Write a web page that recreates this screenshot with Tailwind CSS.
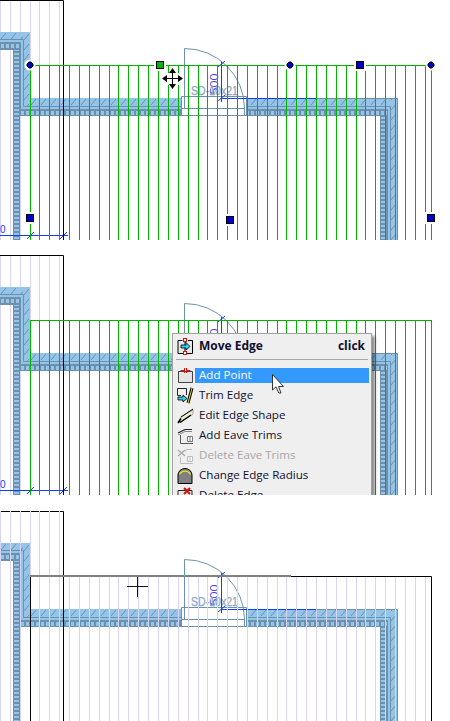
<!DOCTYPE html>
<html lang="en">
<head>
  <meta charset="UTF-8">
  <meta name="viewport" content="width=device-width, initial-scale=1">
  <title>Add Point to Roof Edge</title>
  <script src="https://cdn.jsdelivr.net/npm/@tailwindcss/browser@4"></script>
</head>
<body class="bg-white">

<div class="w-[450px] h-[721px] overflow-hidden flex flex-col">

  <!-- step 1: edge selected -->
  <div class="relative h-[240px] mt-0 overflow-hidden shrink-0">
    <svg class="block" width="450" height="240" viewBox="0 0 450 240">
      <defs>
        <!-- pattern sizes are the distance between wall runs, so both runs start on the same phase -->
        <pattern id="hatch-h" width="10" height="66" patternUnits="userSpaceOnUse" x="0" y="32">
          <rect width="10" height="66" fill="#94c4e8"/>
          <path d="M1 7L6 1" stroke="#6d91ad" fill="none"/>
        </pattern>
        <pattern id="hatch-v" width="367" height="10" patternUnits="userSpaceOnUse" x="23" y="32">
          <rect width="367" height="10" fill="#94c4e8"/>
          <path d="M1 8L6 2" stroke="#6d91ad" fill="none"/>
        </pattern>
        <pattern id="comb-h" width="5" height="67" patternUnits="userSpaceOnUse" x="0" y="43">
          <rect width="5" height="67" fill="#6d91ad"/>
          <rect x="1" y="1" width="3" height="4" fill="#94c4e8"/>
        </pattern>
        <pattern id="comb-v" width="367" height="4" patternUnits="userSpaceOnUse" x="13" y="0">
          <rect width="367" height="4" fill="#6d91ad"/>
          <rect x="1" y="1" width="5" height="2" fill="#94c4e8"/>
        </pattern>

        <g id="plan">
          <!-- walls, left part -->
          <rect x="0" y="32" width="30" height="8" fill="url(#hatch-h)"/>
          <rect x="23" y="32" width="7" height="74" fill="url(#hatch-v)"/>
          <rect x="30" y="98" width="151" height="8" fill="url(#hatch-h)"/>
          <rect x="20" y="40" width="3" height="70" fill="#94c4e8"/>
          <rect x="20" y="106" width="161" height="4" fill="#94c4e8"/>
          <rect x="0" y="40" width="20" height="3" fill="#94c4e8"/>
          <rect x="0" y="43" width="20" height="7" fill="url(#comb-h)"/>
          <rect x="20" y="110" width="161" height="6" fill="url(#comb-h)"/>
          <rect x="13" y="50" width="7" height="190" fill="url(#comb-v)"/>
          <path d="M0 39.5H23.5V106.5H181M0 42.5H20.5V109.5H181M20 115.5H181M13.5 50V240M19.5 116V240M0 49.5H13.5" stroke="#6d91ad" fill="none"/>
          <!-- walls, right part -->
          <rect x="247" y="98" width="151" height="8" fill="url(#hatch-h)"/>
          <rect x="390" y="98" width="8" height="142" fill="url(#hatch-v)"/>
          <rect x="247" y="106" width="143" height="4" fill="#94c4e8"/>
          <rect x="387" y="106" width="3" height="134" fill="#94c4e8"/>
          <rect x="247" y="110" width="140" height="6" fill="url(#comb-h)"/>
          <rect x="380" y="116" width="7" height="124" fill="url(#comb-v)"/>
          <path d="M247 98.5H397.5V240M247 106.5H390.5V240M247 109.5H387.5V240M247 115.5H380.5V240M386.5 116V240" stroke="#6d91ad" fill="none"/>
          <!-- door -->
          <path d="M184.5 108V48.5A60 60 0 0 1 244.5 108" stroke="#6d91ad" fill="none"/>
          <path d="M181.5 116V96.5H246.5V116M181.5 115.5H246.5M181.5 108.5H244.5M244.5 108V116" stroke="#6d91ad" fill="none"/>
          <!-- dimensions -->
          <text x="0" y="0" font-family="'Liberation Sans', sans-serif" font-size="10" fill="#4a40e8" text-anchor="middle" textLength="21" lengthAdjust="spacingAndGlyphs" transform="translate(218 84) rotate(-90)">500</text>
          <text x="191" y="95" font-family="'Liberation Sans', sans-serif" font-size="13" fill="#8ea4c0" stroke="#8ea4c0" stroke-width="0.25" textLength="47" lengthAdjust="spacingAndGlyphs">SD-10x21</text>
          <path d="M221.5 62V102M218 67L225 61M218 101L225 95M222 98.5H316M0 235.5H68M27 239L34 232M60 239L67 232" stroke="#1040f0" fill="none"/>
          <text x="0" y="233" font-family="'Liberation Sans', sans-serif" font-size="10" fill="#1040f0">0</text>
          <!-- outline of the other roof -->
          <path d="M0 0.5H63.5V240" stroke="#000" fill="none"/>
        </g>

        <path id="top-lines" d="M0.5 0V240M10.5 0V240M20.5 0V240M30.5 0V65M39.5 0V65M49.5 0V65M59.5 0V65"/>
        <path id="low-lines" d="M30.5 65V240M39.5 65V240M49.5 65V240M59.5 65V240M69.5 65V240M79.5 65V240M89.5 65V240M99.5 65V240M109.5 65V240M118.5 65V240M128.5 65V240M138.5 65V240M148.5 65V240M158.5 65V240M168.5 65V240M178.5 65V240M188.5 65V240M198.5 65V240M207.5 65V240M217.5 65V240M227.5 65V240M237.5 65V240M247.5 65V240M257.5 65V240M267.5 65V240M277.5 65V240M286.5 65V240M296.5 65V240M306.5 65V240M316.5 65V240M326.5 65V240M336.5 65V240M346.5 65V240M356.5 65V240M365.5 65V240M375.5 65V240M385.5 65V240M395.5 65V240M405.5 65V240M415.5 65V240M425.5 65V240"/>

        <g id="handle-square">
          <rect x="-6" y="-6" width="12" height="12" fill="#fff"/>
          <rect x="-3.5" y="-3.5" width="7" height="7" fill="#0000c8" stroke="#000"/>
        </g>
        <g id="handle-round">
          <circle r="5.5" fill="#fff"/>
          <path d="M-1 -3H1L3 -1V1L1 3H-1L-3 1V-1Z" fill="#0000c8" stroke="#000" stroke-width="1"/>
        </g>
      </defs>

      <use href="#top-lines" stroke="#d8d4f8" fill="none"/>
      <use href="#plan"/>
      <g stroke="#00b400" fill="none">
        <use href="#low-lines"/>
        <path d="M30 65.5H431.5M431.5 65V240"/>
      </g>

      <use href="#handle-round" x="30" y="65"/>
      <use href="#handle-round" x="290" y="65"/>
      <use href="#handle-round" x="431" y="65"/>
      <use href="#handle-square" x="360" y="65"/>
      <use href="#handle-square" x="30" y="218"/>
      <use href="#handle-square" x="230" y="220"/>
      <use href="#handle-square" x="431" y="218"/>
      <rect x="154" y="59" width="12" height="12" fill="#fff"/>
      <rect x="156.5" y="61.5" width="7" height="7" fill="#00b400" stroke="#000"/>

      <!-- move cursor -->
      <rect x="167" y="73" width="12" height="12" fill="#fff"/>
      <path d="M172.5 69V88M163 78.5H182" stroke="#000" fill="none"/>
      <path d="M172.5 68L176 73H169ZM172.5 89L176 84H169ZM162 78.5L167 75V82ZM183 78.5L178 75V82Z" fill="#000"/>
    </svg>
  </div>

  <!-- step 2: context menu -->
  <div class="relative h-[240px] mt-[15px] overflow-hidden shrink-0">
    <svg class="block" width="450" height="240" viewBox="0 0 450 240">
      <use href="#top-lines" stroke="#d8d4f8" fill="none"/>
      <use href="#plan"/>
      <g stroke="#00b400" fill="none">
        <use href="#low-lines"/>
        <path d="M30 65.5H431.5M431.5 65V240"/>
      </g>
    </svg>

    <div class="absolute left-[172px] top-[78px] w-[200px] h-[180px] bg-[#efefef] border border-[#a0a0a0] shadow-[3px_3px_3px_rgba(0,0,0,0.45)] font-['Open_Sans',sans-serif] text-[11.6px] text-[#101030]">
      <div class="flex items-center h-5 mt-[2px] pl-1">
        <svg width="17" height="17" viewBox="0 0 17 17" class="shrink-0">
          <path d="M5.5 2.5H1V15.5H15.5V2.5H11M8 2.5V15.5" stroke="#000" fill="#e8e8e8"/>
          <rect x="6.5" y="0.5" width="3" height="3" fill="#fff" stroke="#d01010"/>
          <rect x="6.5" y="13.5" width="3" height="3" fill="#fff" stroke="#d01010"/>
          <path d="M4 7H9V4.5L13 8.5L9 12V10H4Z" fill="#30d0e8" stroke="#000" stroke-width="0.8"/>
        </svg>
        <span class="ml-[5px] font-bold text-[12px]">Move Edge</span>
        <span class="ml-auto mr-[6px] font-bold text-[12px]">click</span>
      </div>
      <div class="h-px bg-[#a8a8a8] mx-[3px] mt-[3px]"></div>
      <div class="flex items-center h-5 mt-[5px] pl-[5px]">
        <svg width="15" height="15" viewBox="0 0 15 15" class="shrink-0">
          <path d="M0.5 3.5H5M10 3.5H14.5V14.5H0.5V3.5Z" stroke="#444" fill="#e4e4e4"/>
          <path d="M2.5 2.5H6M12.5 2.5H9M6.5 0V5M8.5 0V5" stroke="#d01010" fill="none"/>
        </svg>
        <span class="ml-[2px] pl-[4px] flex-1 mr-[2px] h-[15px] flex items-center bg-[#3399ff] text-white">Add Point</span>
      </div>
      <div class="flex items-center h-5 pl-[4px]">
        <svg width="17" height="17" viewBox="0 0 17 17" class="shrink-0">
          <path d="M0.5 1.5H9.5V8M0.5 1.5V8.5H4" stroke="#222" fill="none"/>
          <path d="M1 10H6V8L10 11.5L6 15V13H1Z" fill="#30d0e8" stroke="#000" stroke-width="0.8"/>
          <path d="M15 1L11 16" stroke="#000" stroke-width="3"/>
          <path d="M15 1L11 16" stroke="#f0e020" stroke-width="1"/>
        </svg>
        <span class="ml-[5px]">Trim Edge</span>
      </div>
      <div class="flex items-center h-5 pl-[4px]">
        <svg width="17" height="17" viewBox="0 0 17 17" class="shrink-0">
          <path d="M1 15L4 10L16 3V7L4 15Z" fill="#f0eecc" stroke="#888" stroke-width="0.7"/>
          <path d="M1 16L4 11.5M3 15.5L14 8" stroke="#000" stroke-width="1.5" fill="none"/>
          <path d="M4 10L16 2" stroke="#000" fill="none"/>
        </svg>
        <span class="ml-[5px]">Edit Edge Shape</span>
      </div>
      <div class="flex items-center h-5 pl-[4px]">
        <svg width="17" height="17" viewBox="0 0 17 17" class="shrink-0">
          <path d="M1 6L8 2.5H15" stroke="#222" stroke-width="1.2" fill="none"/>
          <path d="M1 8L8 4.5H15" stroke="#888" fill="none"/>
          <path d="M3.5 8V16.5H16" stroke="#555" fill="none"/>
          <path d="M10.5 9.5H15.5V14.5H10.5ZM13 9.5V14.5" stroke="#777" fill="#fff"/>
        </svg>
        <span class="ml-[5px]">Add Eave Trims</span>
      </div>
      <div class="flex items-center h-5 pl-[4px]">
        <svg width="17" height="17" viewBox="0 0 17 17" class="shrink-0">
          <path d="M8 4L10 2.5H15M3.5 10V16.5H16" stroke="#bbb" fill="none"/>
          <path d="M1 3L8 9M8 3L1 9" stroke="#aaa" stroke-width="1.5" fill="none"/>
          <path d="M10.5 9.5H15.5V14.5H10.5ZM13 9.5V14.5" stroke="#bbb" fill="#fff"/>
        </svg>
        <span class="ml-[5px] text-[#a8a8a8]">Delete Eave Trims</span>
      </div>
      <div class="flex items-center h-5 pl-[4px]">
        <svg width="17" height="17" viewBox="0 0 17 17" class="shrink-0">
          <path d="M1 16.5V8A7 6.5 0 0 1 15 8V16.5Z" fill="#808080" stroke="#000"/>
          <path d="M2.5 7.5A6 5.5 0 0 1 13.5 7.5" stroke="#f0e020" stroke-width="1.3" fill="none"/>
        </svg>
        <span class="ml-[5px]">Change Edge Radius</span>
      </div>
      <div class="flex items-center h-5 pl-[4px]">
        <svg width="17" height="17" viewBox="0 0 17 17" class="shrink-0">
          <path d="M1 3.5H15V16H1Z" stroke="#222" fill="#e8e8e8"/>
          <path d="M7 1L13 7M13 1L7 7" stroke="#d01010" stroke-width="2" fill="none"/>
        </svg>
        <span class="ml-[5px]">Delete Edge</span>
      </div>
    </div>

    <!-- arrow cursor -->
    <svg class="absolute left-[272px] top-[119px]" width="13" height="20" viewBox="0 0 13 20">
      <path d="M0.5 0.5V16L4 12.8L6.8 19H9L6.5 12.5H11.5Z" fill="#fff" stroke="#333"/>
    </svg>
  </div>

  <!-- step 3: new point placed -->
  <div class="relative h-[210px] mt-[16px] overflow-hidden shrink-0">
    <svg class="block" width="450" height="210" viewBox="0 0 450 210">
      <use href="#plan"/>
      <g stroke="#d8d4f8" fill="none">
        <use href="#top-lines"/>
        <use href="#low-lines"/>
      </g>
      <path d="M30.5 240V65M291 65.5H431.5V240" stroke="#000" fill="none"/>
      <path d="M30 65H291" stroke="#808080" stroke-width="2" fill="none"/>
      <path d="M184 64.5H185" stroke="#30e0d0" fill="none"/>
      <path d="M127 75.5H148M137.5 66V86" stroke="#111" fill="none"/>
    </svg>
  </div>

</div>

</body>
</html>
